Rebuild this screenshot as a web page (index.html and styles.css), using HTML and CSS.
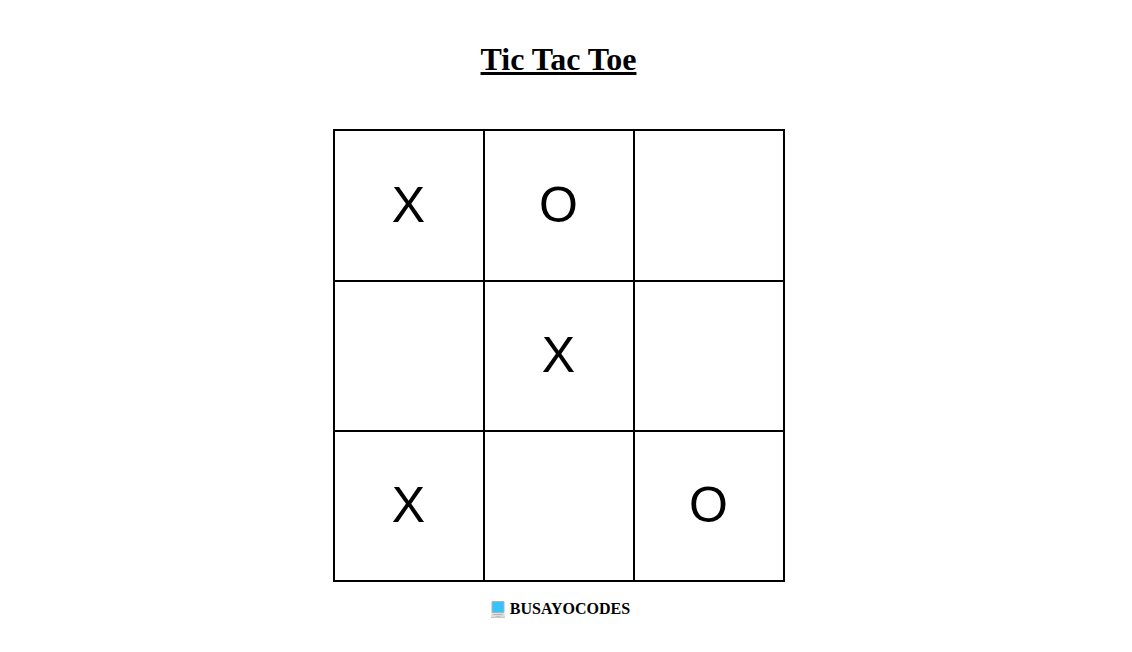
FILE: index.html
```html
<!DOCTYPE html>
<html lang="en">
<head>
  <meta charset="UTF-8">
  <meta name="viewport" content="width=device-width, initial-scale=1.0">
  <title>Tic Tac Toe</title>
  <link rel="stylesheet" href="styles.css">
</head>
<body>
  <div class="page">
    <h1 class="title">Tic Tac Toe</h1>

    <div class="board">
      <div class="cell">X</div>
      <div class="cell">O</div>
      <div class="cell"></div>
      <div class="cell"></div>
      <div class="cell">X</div>
      <div class="cell"></div>
      <div class="cell">X</div>
      <div class="cell"></div>
      <div class="cell">O</div>
    </div>

    <p class="credit">
      <svg class="laptop" width="14" height="17" viewBox="0 0 14 17" aria-hidden="true">
        <rect x="0.5" y="0" width="13" height="12" rx="1" fill="#a9b4bb"/>
        <rect x="1.5" y="1" width="11" height="10" fill="#35c2fd"/>
        <path d="M0.5 12h13l0.5 4H0z" fill="#dcdddf"/>
        <rect x="2.5" y="13" width="9" height="1" fill="#b2b5b8"/>
        <rect x="4.5" y="15" width="5" height="1" fill="#bfc1c4"/>
        <rect x="0" y="16" width="14" height="1" fill="#c4c6c8"/>
      </svg>
      <span>BUSAYOCODES</span>
    </p>
  </div>
</body>
</html>
```

FILE: styles.css
```css
body {
  font-family: "Liberation Serif", "Times New Roman", serif;
  margin: 8px;
  background-color: #fff;
  color: #000;
}

.page {
  display: flex;
  flex-direction: column;
  align-items: center;
  padding-right: 15px;
}

.title {
  margin: 33px 0 51px;
  font-size: 32px;
  font-weight: bold;
  line-height: 37px;
  text-decoration: underline;
}

.board {
  display: grid;
  grid-template-columns: repeat(3, 150px);
  grid-template-rows: 151px 150px 150px;
  border: 1px solid #000;
}

.cell {
  display: flex;
  justify-content: center;
  align-items: center;
  box-sizing: border-box;
  border: 1px solid #000;
  padding-bottom: 2px;
  font-family: "Liberation Sans", Arial, sans-serif;
  font-size: 50px;
}

.credit {
  display: flex;
  align-items: center;
  gap: 5px;
  margin: 18px 0 0;
  padding-left: 4px;
  font-size: 16px;
  font-weight: bold;
  line-height: 18px;
}

.laptop {
  display: block;
}
```
